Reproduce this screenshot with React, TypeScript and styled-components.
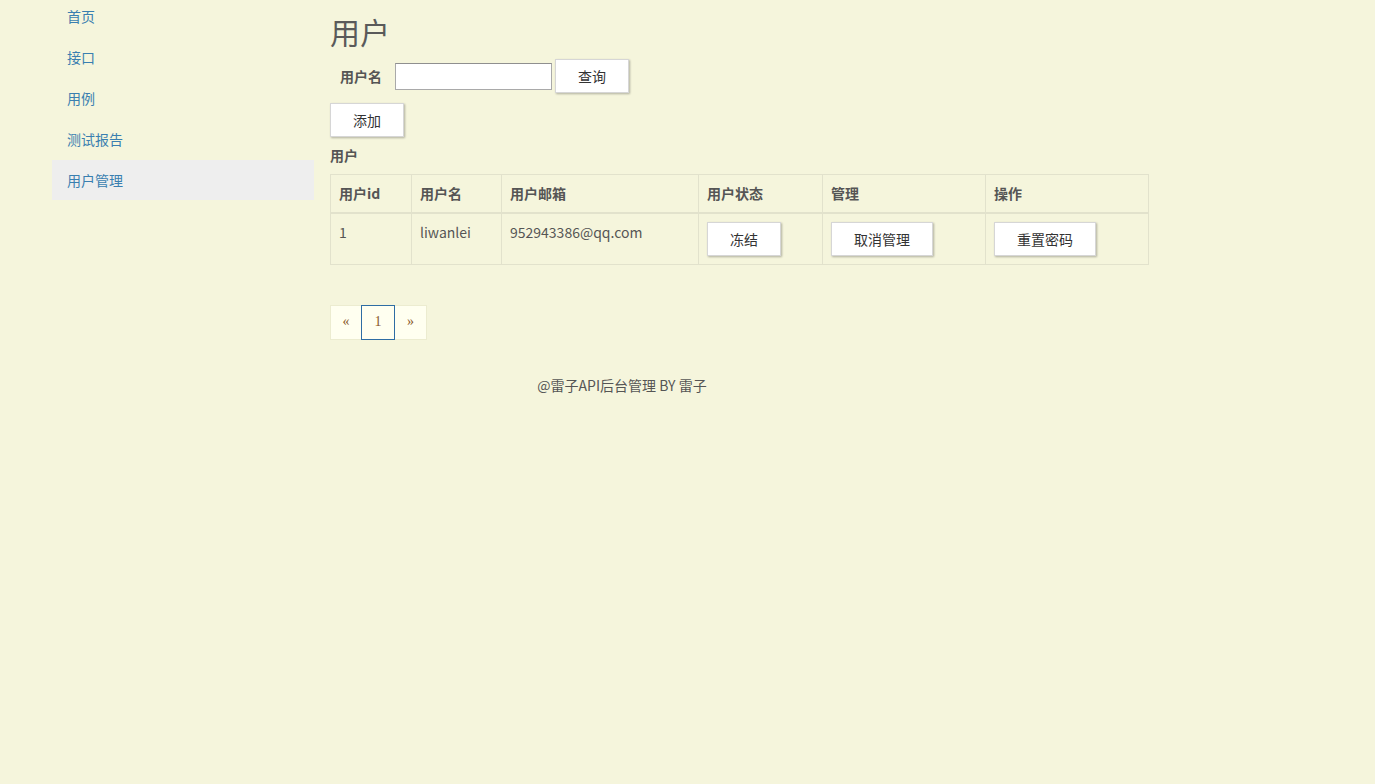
import React, { useState } from "react";
import styled, { createGlobalStyle, css } from "styled-components";

type User = {
    id: number;
    name: string;
    email: string;
};

const users: User[] = [{ id: 1, name: "liwanlei", email: "952943386@qq.com" }];

const navItems = ["首页", "接口", "用例", "测试报告", "用户管理"];

const GlobalStyle = createGlobalStyle`
  html, body {
    margin: 0;
    padding: 0;
    background: #f5f5dc;
  }
  body {
    font-family: "Noto Sans CJK SC", "Noto Sans", sans-serif;
    font-size: 14px;
    line-height: 20px;
    color: #555;
    min-height: 784px;
  }
`;

const Page = styled.div`
  display: flex;
  align-items: flex-start;
`;

const Sidebar = styled.ul`
  list-style: none;
  margin: -4px 0 0 52px;
  padding: 0;
  width: 262px;
  display: flex;
  flex-direction: column;
  gap: 1px;
`;

const NavLink = styled.a<{ $active?: boolean }>`
  display: block;
  height: 40px;
  box-sizing: border-box;
  padding: 10px 15px;
  color: #3a7fb0;
  text-decoration: none;
  ${(p) =>
        p.$active &&
        css`
      background: #eeeeee;
    `}
`;

const Main = styled.main`
  margin-left: 16px;
  display: flex;
  flex-direction: column;
  align-items: flex-start;
`;

const Title = styled.h2`
  margin: 14px 0 0;
  font-size: 30px;
  line-height: 34px;
  font-weight: 400;
  color: #5a5a5a;
`;

const SearchRow = styled.div`
  margin-top: 11px;
  display: flex;
  align-items: center;
  height: 34px;
`;

const Label = styled.label`
  font-weight: 700;
  padding-left: 10px;
  margin-right: 13px;
`;

const Input = styled.input`
  width: 157px;
  height: 27px;
  box-sizing: border-box;
  border: 1px solid #a9a9a9;
  border-top-color: #8f8f8f;
  background: #fff;
  margin-right: 3px;
  padding: 1px 4px;
  font-size: 14px;
`;

const Button = styled.button<{ $wide?: boolean }>`
  width: ${(p) => (p.$wide ? "102px" : "74px")};
  height: 34px;
  box-sizing: border-box;
  background: #fff;
  border: 1px solid #d6d6d6;
  box-shadow: 1px 1px 2px rgba(0, 0, 0, 0.28);
  font-family: "Noto Sans CJK SC", sans-serif;
  font-size: 14px;
  color: #333;
  padding: 0;
  cursor: pointer;
`;

const AddRow = styled.div`
  margin-top: 10px;
`;

const Caption = styled.div`
  margin-top: 8px;
  font-weight: 700;
`;

const Table = styled.table`
  margin-top: 9px;
  width: 818px;
  border-collapse: collapse;
  table-layout: fixed;
`;

const Th = styled.th`
  text-align: left;
  padding: 8px 8px 9px;
  font-weight: 700;
  border: 1px solid #e2e2cc;
  border-bottom: 2px solid #e2e2cc;
`;

const Td = styled.td`
  padding: 8px;
  vertical-align: top;
  border: 1px solid #e2e2cc;
`;

const Pager = styled.ul`
  list-style: none;
  margin: 40px 0 0;
  padding: 0;
  display: flex;
`;

const PageLink = styled.li<{ $active?: boolean; $w: number }>`
  width: ${(p) => p.$w}px;
  height: 35px;
  box-sizing: border-box;
  padding: 6px 0;
  margin-left: -1px;
  text-align: center;
  font-family: "Liberation Serif", serif;
  font-size: 14px;
  color: #8a5a2b;
  background: #fffff0;
  border: 1px solid #ececd0;
  &:first-child {
    margin-left: 0;
  }
  ${(p) =>
        p.$active &&
        css`
      position: relative;
      border-color: #2e6da4;
    `}
`;

const Footer = styled.footer`
  width: 584px;
  margin-top: 35px;
  text-align: center;
  color: #555;
`;

const App = () => {
    const [name, setName] = useState("");

    return (
        <>
            <GlobalStyle />
            <Page>
                <Sidebar>
                    {navItems.map((item) => (
                        <li key={item}>
                            <NavLink href="#" $active={item === "用户管理"}>
                                {item}
                            </NavLink>
                        </li>
                    ))}
                </Sidebar>
                <Main>
                    <Title>用户</Title>
                    <SearchRow>
                        <Label>用户名</Label>
                        <Input value={name} onChange={(evt) => setName(evt.target.value)} />
                        <Button>查询</Button>
                    </SearchRow>
                    <AddRow>
                        <Button>添加</Button>
                    </AddRow>
                    <Caption>用户</Caption>
                    <Table>
                        <colgroup>
                            <col style={{ width: 81 }} />
                            <col style={{ width: 90 }} />
                            <col style={{ width: 197 }} />
                            <col style={{ width: 124 }} />
                            <col style={{ width: 163 }} />
                            <col style={{ width: 163 }} />
                        </colgroup>
                        <thead>
                            <tr>
                                <Th>用户id</Th>
                                <Th>用户名</Th>
                                <Th>用户邮箱</Th>
                                <Th>用户状态</Th>
                                <Th>管理</Th>
                                <Th>操作</Th>
                            </tr>
                        </thead>
                        <tbody>
                            {users.map((u) => (
                                <tr key={u.id}>
                                    <Td>{u.id}</Td>
                                    <Td>{u.name}</Td>
                                    <Td>{u.email}</Td>
                                    <Td>
                                        <Button>冻结</Button>
                                    </Td>
                                    <Td>
                                        <Button $wide>取消管理</Button>
                                    </Td>
                                    <Td>
                                        <Button $wide>重置密码</Button>
                                    </Td>
                                </tr>
                            ))}
                        </tbody>
                    </Table>
                    <Pager>
                        <PageLink $w={32}>«</PageLink>
                        <PageLink $w={34} $active>1</PageLink>
                        <PageLink $w={33}>»</PageLink>
                    </Pager>
                    <Footer>@雷子API后台管理 BY 雷子</Footer>
                </Main>
            </Page>
        </>
    );
};

export default App;
